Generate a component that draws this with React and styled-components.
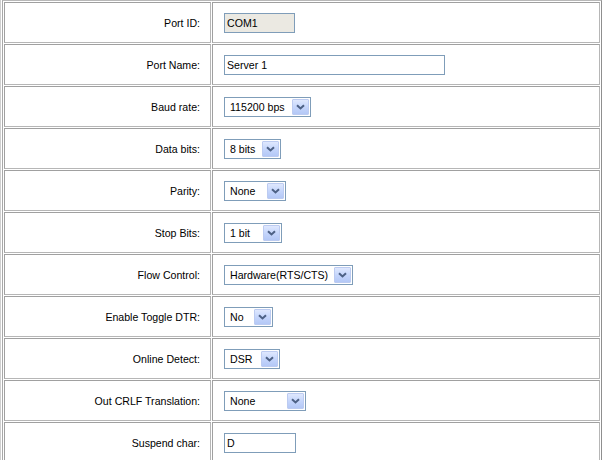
import React from "react";
import styled, { createGlobalStyle } from "styled-components";

const Global = createGlobalStyle`
  html, body { margin: 0; padding: 0; background: #ffffff; }
  body { font-family: "Liberation Sans", Arial, sans-serif; font-size: 10.6px; color: #000; }
`;

const Page = styled.div`
  border-left: 1px solid #cfcfcf;
  padding-left: 1px;
`;

const FormTable = styled.table`
  width: 600px;
  border-collapse: separate;
  border-spacing: 1px;
  border-style: solid;
  border-width: 1px;
  border-color: #b8b8b8 #8f8f8f #8f8f8f #a8a8a8;
`;

const Cell = styled.td`
  height: 39px;
  padding: 0;
  border-style: solid;
  border-width: 1px;
  border-color: #a0a0a0 #b6b6b6 #b6b6b6 #a0a0a0;
  vertical-align: middle;
  font-size: 10.6px;
`;

const LabelCell = styled(Cell)`
  width: 195px;
  text-align: right;
  padding-right: 10px;
`;

const FieldCell = styled(Cell)`
  padding-left: 11px;
`;

const TextBox = styled.div`
  box-sizing: border-box;
  width: ${(p) => p.$w}px;
  height: 20px;
  border: 1px solid #7f9db9;
  background: ${(p) => (p.$disabled ? "#ebe9e2" : "#ffffff")};
  padding: 0 2px;
  line-height: 18px;
  font-size: 10.6px;
  white-space: nowrap;
  overflow: hidden;
`;

const Combo = styled.div`
  box-sizing: border-box;
  width: ${(p) => p.$w}px;
  height: 20px;
  border: 1px solid #7f9db9;
  background: #ffffff;
  display: flex;
  align-items: center;
  justify-content: space-between;
  padding: 0 1px 0 5px;
`;

const ComboText = styled.span`
  font-size: 10.6px;
  white-space: nowrap;
  line-height: 18px;
`;

const DropButton = styled.span`
  box-sizing: border-box;
  width: 17px;
  height: 16px;
  border: 1px solid #bccbf1;
  border-radius: 1px;
  background: linear-gradient(#dfe8fe, #c3d4fb 55%, #b4c8f6);
  display: flex;
  align-items: center;
  justify-content: center;
`;

const Chevron = () => (
  <svg width="9" height="6" viewBox="0 0 9 6">
    <path d="M1 1.2 L4.5 4.5 L8 1.2" fill="none" stroke="#4d6185" strokeWidth="2" />
  </svg>
);

const Select = ({ w, value }) => (
  <Combo $w={w}>
    <ComboText>{value}</ComboText>
    <DropButton>
      <Chevron />
    </DropButton>
  </Combo>
);

const rows = [
  { label: "Port ID:", kind: "text", value: "COM1", w: 71, disabled: true },
  { label: "Port Name:", kind: "text", value: "Server 1", w: 221 },
  { label: "Baud rate:", kind: "select", value: "115200 bps", w: 87 },
  { label: "Data bits:", kind: "select", value: "8 bits", w: 57 },
  { label: "Parity:", kind: "select", value: "None", w: 62 },
  { label: "Stop Bits:", kind: "select", value: "1 bit", w: 58 },
  { label: "Flow Control:", kind: "select", value: "Hardware(RTS/CTS)", w: 129 },
  { label: "Enable Toggle DTR:", kind: "select", value: "No", w: 49 },
  { label: "Online Detect:", kind: "select", value: "DSR", w: 56 },
  { label: "Out CRLF Translation:", kind: "select", value: "None", w: 82 },
  { label: "Suspend char:", kind: "text", value: "D", w: 72 },
];

export default function App() {
  return (
    <>
      <Global />
      <Page>
        <FormTable>
          <tbody>
            {rows.map((r) => (
              <tr key={r.label}>
                <LabelCell>{r.label}</LabelCell>
                <FieldCell>
                  {r.kind === "text" ? (
                    <TextBox $w={r.w} $disabled={r.disabled}>
                      {r.value}
                    </TextBox>
                  ) : (
                    <Select w={r.w} value={r.value} />
                  )}
                </FieldCell>
              </tr>
            ))}
          </tbody>
        </FormTable>
      </Page>
    </>
  );
}
